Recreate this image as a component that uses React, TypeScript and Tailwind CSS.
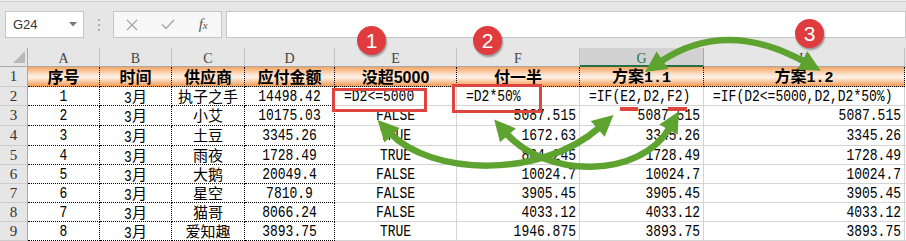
import React from "react";

const GREEN = "#5ea22f";

const colLetters = ["A", "B", "C", "D", "E", "F", "G", "H"];

const rowsData: string[][] = [
  ["1", "3月", "执子之手", "14498.42", "=D2<=5000", "=D2*50%", "=IF(E2,D2,F2)", "=IF(D2<=5000,D2,D2*50%)"],
  ["2", "3月", "小艾", "10175.03", "FALSE", "5087.515", "5087.515", "5087.515"],
  ["3", "3月", "土豆", "3345.26", "TRUE", "1672.63", "3345.26", "3345.26"],
  ["4", "3月", "雨夜", "1728.49", "TRUE", "864.245", "1728.49", "1728.49"],
  ["5", "3月", "大鹅", "20049.4", "FALSE", "10024.7", "10024.7", "10024.7"],
  ["6", "3月", "星空", "7810.9", "FALSE", "3905.45", "3905.45", "3905.45"],
  ["7", "3月", "猫哥", "8066.24", "FALSE", "4033.12", "4033.12", "4033.12"],
  ["8", "3月", "爱知趣", "3893.75", "TRUE", "1946.875", "3893.75", "3893.75"],
];

function Mixed({ s }: { s: string }) {
  const parts = s.split(/([\u4e00-\u9fff]+)/);
  return (
    <span className="whitespace-nowrap leading-none">
      {parts.map((p, i) =>
        /[\u4e00-\u9fff]/.test(p) ? (
          <span key={i} className="inline-block font-['Noto_Sans_CJK_SC',sans-serif] text-[15px] leading-[15px]">
            {p}
          </span>
        ) : p ? (
          <span key={i} className="inline-block scale-y-[1.22] leading-none">
            {p}
          </span>
        ) : null
      )}
    </span>
  );
}

function Toolbar() {
  return (
    <div>
      <div className="h-px bg-[#ededed]" />
      <div className="h-px bg-[#cdcdcd]" />
      <div className="flex h-[46px] items-start pl-[5px] pt-[9px]">
        <div className="flex h-[27px] w-[102px] items-center justify-between border border-[#c6c6c6] bg-white pl-[7px] pr-[6px]">
          <span className="font-['Liberation_Sans',sans-serif] text-[13px] text-[#333]">G24</span>
          <svg width="8" height="5" viewBox="0 0 8 5">
            <path d="M0 0 L8 0 L4 4.5 Z" fill="#7a7a7a" />
          </svg>
        </div>
        <div className="ml-[14px] flex h-[27px] w-[3px] flex-col items-center justify-center gap-[3px]">
          <div className="h-[2px] w-[2px] bg-[#b0b0b0]" />
          <div className="h-[2px] w-[2px] bg-[#b0b0b0]" />
          <div className="h-[2px] w-[2px] bg-[#b0b0b0]" />
        </div>
        <div className="ml-[13px] flex h-[27px] w-[109px] items-center border border-[#c6c6c6] bg-[#f7f7f7]">
          <div className="flex w-[36px] justify-center">
            <svg width="12" height="12" viewBox="0 0 12 12">
              <path d="M1 1 L11 11 M11 1 L1 11" stroke="#a8a8a8" strokeWidth="1.3" fill="none" />
            </svg>
          </div>
          <div className="flex w-[36px] justify-center">
            <svg width="14" height="11" viewBox="0 0 14 11">
              <path d="M1 5.5 L5 9.5 L13 1" stroke="#a8a8a8" strokeWidth="1.5" fill="none" />
            </svg>
          </div>
          <div className="flex w-[36px] justify-center">
            <span className="font-['Liberation_Serif',serif] text-[15px] italic leading-none text-[#555]">
              f<span className="text-[11px]">x</span>
            </span>
          </div>
        </div>
        <div className="ml-[4px] h-[27px] w-[680px] shrink-0 border border-[#c6c6c6] bg-white" />
      </div>
    </div>
  );
}

const mono = "font-['Liberation_Mono','Noto_Sans_CJK_SC',monospace] text-[13px] text-black";
const cjkBold = "font-['Noto_Sans_CJK_SC',sans-serif] text-[16px] font-bold leading-none";

function HeaderText({ s }: { s: string }) {
  const m = s.match(/^([\u4e00-\u9fff]+)(.*)$/);
  if (!m) return <span className={cjkBold}>{s}</span>;
  const rest = m[2];
  return (
    <span className="whitespace-nowrap leading-none">
      <span className={cjkBold}>{m[1]}</span>
      {rest === "5000" && (
        <span className="font-['Liberation_Sans',sans-serif] text-[16px] font-bold leading-none">5000</span>
      )}
      {rest.startsWith("1.") && (
        <span className="font-['Liberation_Mono',monospace] text-[15px] font-bold leading-none">{rest}</span>
      )}
    </span>
  );
}

const header = ["序号", "时间", "供应商", "应付金额", "没超5000", "付一半", "方案1.1", "方案1.2"];

function Sheet() {
  const rowHeader =
    "flex items-center justify-center border-r border-b border-r-[#a9a9a9] border-b-[#cdcdcd] bg-[#e6e6e6] font-['Liberation_Serif',serif] text-[15px] text-[#333]";
  const cells: React.ReactNode[] = [];

  cells.push(
    <div key="corner" className="relative border-r border-b border-r-[#a9a9a9] border-b-[#a9a9a9] bg-[#e6e6e6]">
      <svg className="absolute right-[2px] bottom-[3px]" width="12" height="12" viewBox="0 0 12 12">
        <path d="M12 0 L12 12 L0 12 Z" fill="#b9b9b9" />
      </svg>
    </div>
  );
  colLetters.forEach((c) => {
    const sel = c === "G";
    cells.push(
      <div
        key={"h" + c}
        className={
          "flex items-center justify-center pt-[3px] font-['Liberation_Serif',serif] text-[14px] border-r " +
          (sel
            ? "border-b-2 border-b-[#217346] border-r-[#a9a9a9] bg-[#d2d2d2] text-[#217346]"
            : "border-b border-b-[#a9a9a9] border-r-[#c4c4c4] bg-[#e6e6e6] text-[#444]")
        }
      >
        {c}
      </div>
    );
  });
  cells.push(<div key="hf" className="border-b border-b-[#a9a9a9] bg-[#e6e6e6]" />);

  cells.push(
    <div key="r1" className={rowHeader}>
      1
    </div>
  );
  header.forEach((h, i) => {
    cells.push(
      <div
        key={"t" + i}
        className="flex items-center justify-center border-r border-b border-dotted border-black bg-[linear-gradient(180deg,#f6a461_0%,#fde3cf_40%,#fff1e6_55%,#f39b55_100%)] text-black"
      >
        <HeaderText s={h} />
      </div>
    );
  });
  cells.push(<div key="t-f" className="bg-white" />);

  rowsData.forEach((r, ri) => {
    const rn = ri + 2;
    cells.push(
      <div key={"rh" + rn} className={rowHeader}>
        {rn}
      </div>
    );
    r.forEach((v, ci) => {
      let cls = "flex items-center whitespace-nowrap " + mono + " ";
      if (ci < 4) cls += "border-r border-b border-dotted border-black justify-center ";
      else cls += "border-r border-b border-[#d4d4d4] ";
      if (ci === 4) cls += ri === 0 ? "justify-start pl-[9px] " : "justify-center ";
      if (ci >= 5) cls += ri === 0 ? "justify-start pl-[9px] " : "justify-end pr-[3px] ";
      cells.push(
        <div key={"c" + rn + "-" + ci} className={cls + "bg-white"}>
          <Mixed s={v} />
        </div>
      );
    });
    cells.push(<div key={"f" + rn} className="border-b border-[#d4d4d4] bg-white" />);
  });

  return (
    <div className="grid grid-cols-[28px_72px_72px_73px_90px_122px_123px_124px_201px_1px] grid-rows-[19px_20px_19px_20px_20px_19px_19px_19px_19px_19px]">
      {cells}
    </div>
  );
}

function Overlays() {
  return (
    <>
      <div className="absolute left-[332px] top-[88px] h-[24px] w-[95px] border-[3px] border-[#e0443f]" />
      <div className="absolute left-[452px] top-[84px] h-[29px] w-[90px] border-[3px] border-[#e0443f]" />
      <div className="absolute left-[620px] top-[107px] h-[4px] w-[18px] bg-[#e0443f]" />
      <div className="absolute left-[668px] top-[107px] h-[4px] w-[19px] bg-[#e0443f]" />

      <svg className="pointer-events-none absolute left-0 top-0" width="906" height="241" viewBox="0 0 906 241">
        <defs>
          <marker
            id="ah"
            viewBox="0 0 24 24"
            refX="5"
            refY="12"
            markerWidth="24"
            markerHeight="24"
            markerUnits="userSpaceOnUse"
            orient="auto-start-reverse"
          >
            <path d="M2 1.5 L23 12 L2 22.5 Z" fill={GREEN} />
          </marker>
        </defs>
        <path d="M660 62 Q725 18 805 62" stroke={GREEN} strokeWidth="6.5" fill="none" markerStart="url(#ah)" markerEnd="url(#ah)" />
        <path d="M390 133 C430 175 540 180 600 127" stroke={GREEN} strokeWidth="6.5" fill="none" markerStart="url(#ah)" markerEnd="url(#ah)" />
        <path d="M506 133 C545 178 640 180 670 127" stroke={GREEN} strokeWidth="6.5" fill="none" markerStart="url(#ah)" markerEnd="url(#ah)" />
      </svg>

      {[
        { n: "1", cls: "left-[357px] top-[26px]" },
        { n: "2", cls: "left-[473px] top-[26px]" },
        { n: "3", cls: "left-[795px] top-[19px]" },
      ].map((c) => (
        <div
          key={c.n}
          className={
            "absolute flex h-[29px] w-[29px] items-center justify-center rounded-full bg-[#e03c40] font-['Liberation_Sans',sans-serif] text-[21px] leading-none text-white shadow-[1px_2px_2px_rgba(0,0,0,0.35)] " +
            c.cls
          }
        >
          {c.n}
        </div>
      ))}
    </>
  );
}

export default function App() {
  return (
    <div className="relative h-[241px] w-[906px] overflow-hidden bg-[#e6e6e6]">
      <Toolbar />
      <Sheet />
      <Overlays />
    </div>
  );
}
